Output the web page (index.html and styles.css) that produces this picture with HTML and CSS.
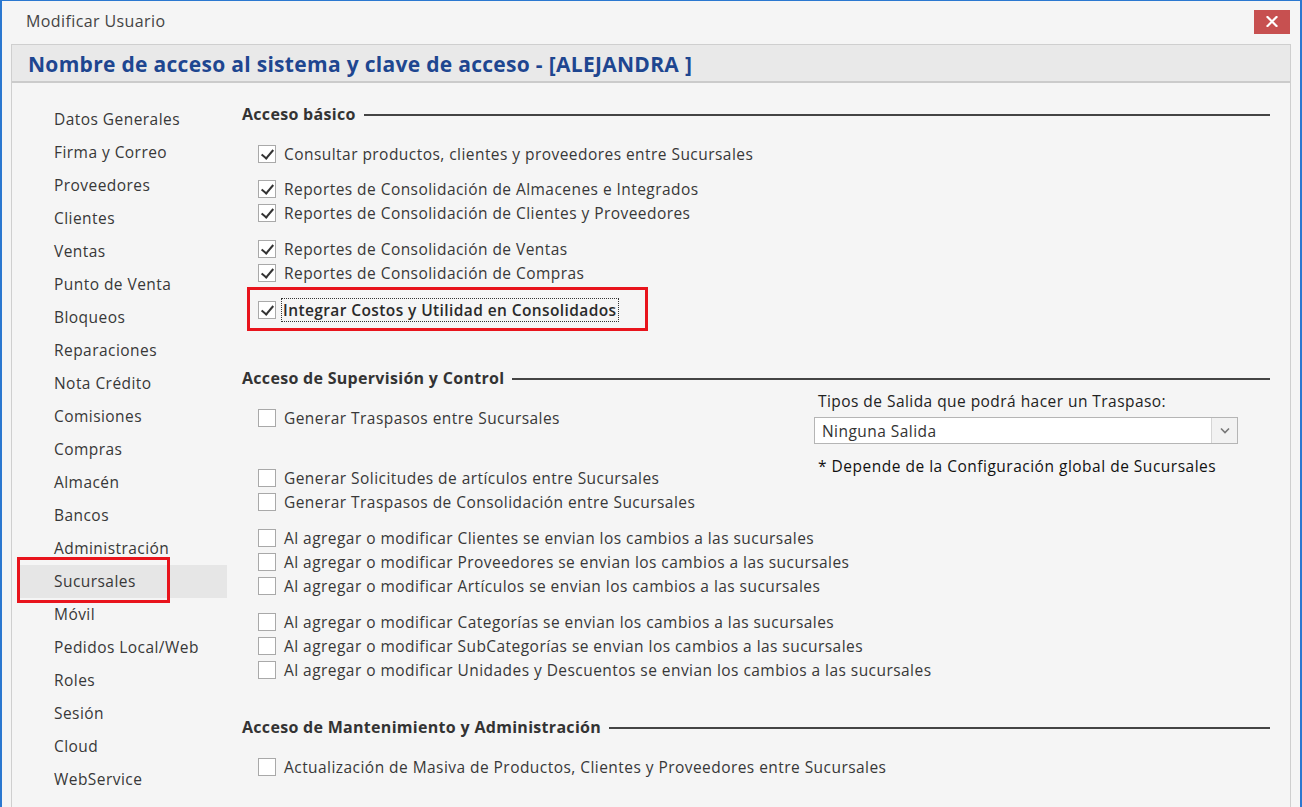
FILE: index.html
```html
<!DOCTYPE html>
<html>
<head>
	<title>Modificar Usuario</title>
	<link rel="stylesheet" href="styles.css">
</head>
<body>
	<div class="window">
		<div class="titlebar">
			<span class="title">Modificar Usuario</span>
			<button class="close">
				<svg width="12" height="11" viewBox="0 0 12 11"><path d="M1.5 1 L10.5 10 M10.5 1 L1.5 10" stroke="#fff" stroke-width="2.2" stroke-linecap="square"/></svg>
			</button>
		</div>
		<div class="panel">
			<div class="panel-head">Nombre de acceso al sistema y clave de acceso - [ALEJANDRA ]</div>
			<div class="panel-body">
				<ul class="nav">
					<li>Datos Generales</li>
					<li>Firma y Correo</li>
					<li>Proveedores</li>
					<li>Clientes</li>
					<li>Ventas</li>
					<li>Punto de Venta</li>
					<li>Bloqueos</li>
					<li>Reparaciones</li>
					<li>Nota Crédito</li>
					<li>Comisiones</li>
					<li>Compras</li>
					<li>Almacén</li>
					<li>Bancos</li>
					<li>Administración</li>
					<li class="active marked">Sucursales</li>
					<li>Móvil</li>
					<li>Pedidos Local/Web</li>
					<li>Roles</li>
					<li>Sesión</li>
					<li>Cloud</li>
					<li>WebService</li>
				</ul>
				<div class="content">
					<div class="section-title">Acceso básico</div>
					<div class="group g-first">
						<div class="row"><span class="check on"></span><span class="label">Consultar productos, clientes y proveedores entre Sucursales</span></div>
					</div>
					<div class="group g-11">
						<div class="row"><span class="check on"></span><span class="label">Reportes de Consolidación de Almacenes e Integrados</span></div>
						<div class="row"><span class="check on"></span><span class="label">Reportes de Consolidación de Clientes y Proveedores</span></div>
					</div>
					<div class="group">
						<div class="row"><span class="check on"></span><span class="label">Reportes de Consolidación de Ventas</span></div>
						<div class="row"><span class="check on"></span><span class="label">Reportes de Consolidación de Compras</span></div>
					</div>
					<div class="group g-13">
						<div class="row marked"><span class="check on"></span><span class="label focus">Integrar Costos y Utilidad en Consolidados</span></div>
					</div>

					<div class="section-title s2">Acceso de Supervisión y Control</div>
					<div class="split">
						<div class="left">
							<div class="group g-first">
								<div class="row"><span class="check"></span><span class="label">Generar Traspasos entre Sucursales</span></div>
							</div>
							<div class="group g-36">
								<div class="row"><span class="check"></span><span class="label">Generar Solicitudes de artículos entre Sucursales</span></div>
								<div class="row"><span class="check"></span><span class="label">Generar Traspasos de Consolidación entre Sucursales</span></div>
							</div>
							<div class="group">
								<div class="row"><span class="check"></span><span class="label">Al agregar o modificar Clientes se envian los cambios a las sucursales</span></div>
								<div class="row"><span class="check"></span><span class="label">Al agregar o modificar Proveedores se envian los cambios a las sucursales</span></div>
								<div class="row"><span class="check"></span><span class="label">Al agregar o modificar Artículos se envian los cambios a las sucursales</span></div>
							</div>
							<div class="group">
								<div class="row"><span class="check"></span><span class="label">Al agregar o modificar Categorías se envian los cambios a las sucursales</span></div>
								<div class="row"><span class="check"></span><span class="label">Al agregar o modificar SubCategorías se envian los cambios a las sucursales</span></div>
								<div class="row"><span class="check"></span><span class="label">Al agregar o modificar Unidades y Descuentos se envian los cambios a las sucursales</span></div>
							</div>
						</div>
						<div class="right">
							<div class="combo-label">Tipos de Salida que podrá hacer un Traspaso:</div>
							<div class="combo">
								<span class="combo-value">Ninguna Salida</span>
								<span class="combo-btn">
									<svg width="10" height="7" viewBox="0 0 10 7"><path d="M1 1.5 L5 5.5 L9 1.5" fill="none" stroke="#777" stroke-width="1.6"/></svg>
								</span>
							</div>
							<div class="note">* Depende de la Configuración global de Sucursales</div>
						</div>
					</div>

					<div class="section-title s3">Acceso de Mantenimiento y Administración</div>
					<div class="group g-first">
						<div class="row"><span class="check"></span><span class="label">Actualización de Masiva de Productos, Clientes y Proveedores entre Sucursales</span></div>
					</div>
				</div>
			</div>
		</div>
	</div>
</body>
</html>
```

FILE: styles.css
```css
* {
	margin: 0px;
	padding: 0px;
	box-sizing: border-box;
}
body {
	font-family: "Open Sans", "Noto Sans", sans-serif;
	background: #f5f5f5;
	color: #333;
}
.window {
	width: 1302px;
	height: 807px;
	border-top: 1px solid #2b78d0;
	border-left: 2px solid #2b78d0;
	border-right: 2px solid #2b78d0;
	background: #f5f5f5;
	overflow: hidden;
}
.titlebar {
	height: 43px;
	display: flex;
	align-items: center;
	justify-content: space-between;
	padding: 0 10px 4px 24px;
}
.title {
	font-size: 16px;
	letter-spacing: 0.4px;
	color: #444;
}
.close {
	width: 36px;
	height: 24px;
	margin-top: 2px;
	background: #c75050;
	border: none;
	display: flex;
	align-items: center;
	justify-content: center;
}
.panel {
	margin: 0 9px;
	border: 1px solid #cfcfcf;
	border-bottom: none;
	height: 763px;
}
.panel-head {
	height: 38px;
	background: #e9e9e9;
	border-bottom: 2px solid #cbcbcb;
	padding-left: 16px;
	font-size: 21px;
	font-weight: bold;
	letter-spacing: 0.3px;
	line-height: 38px;
	color: #1e4690;
}
.panel-body {
	display: flex;
	background: #f5f5f5;
}
.nav {
	list-style: none;
	width: 209px;
	margin-left: 6px;
	padding-top: 20px;
}
.nav li {
	height: 33px;
	line-height: 33px;
	padding-left: 36px;
	font-size: 15.5px;
	letter-spacing: 0.45px;
	color: #383838;
}
.nav li.active {
	background: #e6e6e6;
}
.marked {
	position: relative;
}
.nav li.marked::after,
.row.marked::after {
	content: "";
	position: absolute;
	box-sizing: border-box;
	border: 3px solid #e8141c;
}
.nav li.marked::after {
	left: -1px;
	top: -8px;
	width: 153px;
	height: 46px;
}
.row.marked::after {
	left: 5px;
	top: -11px;
	width: 401px;
	height: 44px;
}
.content {
	flex: 1;
	margin-left: 15px;
	padding: 21px 20px 0 0;
}
.section-title {
	display: flex;
	align-items: center;
	height: 20px;
	font-size: 16px;
	font-weight: bold;
	letter-spacing: 0.3px;
	color: #333;
}
.section-title::after {
	content: "";
	flex: 1;
	height: 2px;
	background: #444;
	margin-left: 8px;
	margin-top: 2px;
}
.section-title.s2 {
	margin-top: 46px;
}
.section-title.s3 {
	margin-top: 35px;
}
.group {
	margin-top: 12px;
}
.group.g-first {
	margin-top: 18px;
}
.group.g-11 {
	margin-top: 11px;
}
.group.g-13 {
	margin-top: 13px;
}
.group.g-36 {
	margin-top: 36px;
}
.row {
	height: 24px;
	display: flex;
	align-items: center;
	padding-left: 16px;
}
.check {
	flex-shrink: 0;
	width: 18px;
	height: 18px;
	border: 1px solid #a9a9a9;
	background: #fff;
	margin-right: 8px;
	position: relative;
}
.check.on::after {
	content: "";
	position: absolute;
	left: 5px;
	top: 1px;
	width: 5px;
	height: 10px;
	border-right: 2px solid #333;
	border-bottom: 2px solid #333;
	transform: rotate(40deg);
}
.label {
	font-size: 15.5px;
	letter-spacing: 0.45px;
	color: #383838;
	white-space: nowrap;
}
.label.focus {
	outline: 1px dotted #333;
	font-weight: 600;
	letter-spacing: 0.4px;
	color: #2a2a2a;
	padding: 0 1px;
	margin-left: -2px;
}
.split {
	display: flex;
}
.split .left {
	width: 572px;
	flex-shrink: 0;
}
.split .right {
	padding-top: 3px;
}
.combo-label {
	height: 20px;
	line-height: 20px;
	padding-left: 4px;
	font-size: 15.5px;
	letter-spacing: 0.45px;
	color: #222;
}
.combo {
	margin-top: 6px;
	width: 424px;
	height: 27px;
	border: 1px solid #b5b5b5;
	background: #fff;
	display: flex;
	align-items: center;
}
.combo-value {
	flex: 1;
	padding-left: 7px;
	font-size: 15.5px;
	letter-spacing: 0.45px;
	color: #333;
}
.combo-btn {
	width: 26px;
	height: 100%;
	background: #f2f2f2;
	border-left: 1px solid #d5d5d5;
	display: flex;
	align-items: center;
	justify-content: center;
}
.note {
	margin-top: 12px;
	height: 20px;
	line-height: 20px;
	padding-left: 4px;
	font-size: 15.5px;
	letter-spacing: 0.5px;
	color: #111;
}
```
